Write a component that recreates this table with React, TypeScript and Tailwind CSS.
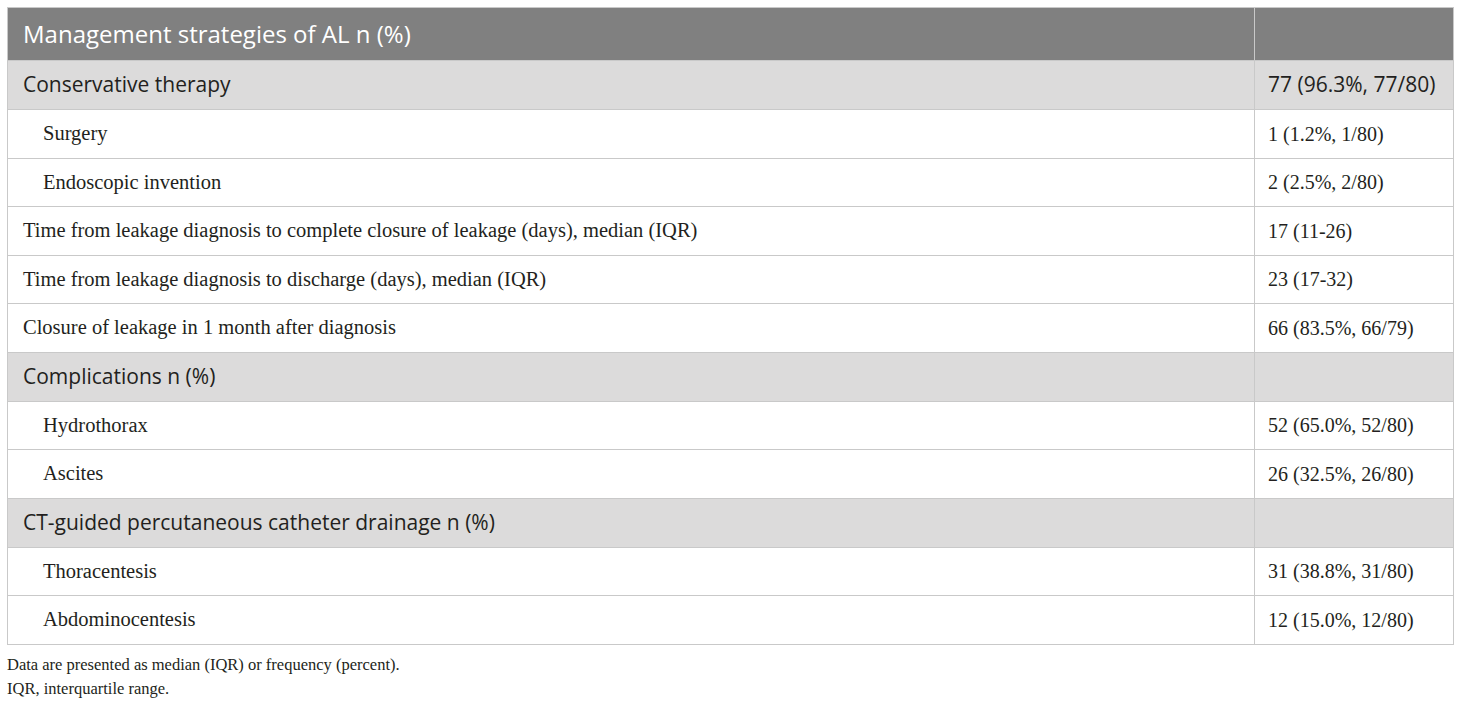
import React from 'react';

type Row = {
  label: string;
  value?: string;
  kind: 'section' | 'item' | 'sub';
};

const rows: Row[] = [
  { label: 'Conservative therapy', value: '77 (96.3%, 77/80)', kind: 'section' },
  { label: 'Surgery', value: '1 (1.2%, 1/80)', kind: 'sub' },
  { label: 'Endoscopic invention', value: '2 (2.5%, 2/80)', kind: 'sub' },
  { label: 'Time from leakage diagnosis to complete closure of leakage (days), median (IQR)', value: '17 (11-26)', kind: 'item' },
  { label: 'Time from leakage diagnosis to discharge (days), median (IQR)', value: '23 (17-32)', kind: 'item' },
  { label: 'Closure of leakage in 1 month after diagnosis', value: '66 (83.5%, 66/79)', kind: 'item' },
  { label: 'Complications n (%)', kind: 'section' },
  { label: 'Hydrothorax', value: '52 (65.0%, 52/80)', kind: 'sub' },
  { label: 'Ascites', value: '26 (32.5%, 26/80)', kind: 'sub' },
  { label: 'CT-guided percutaneous catheter drainage n (%)', kind: 'section' },
  { label: 'Thoracentesis', value: '31 (38.8%, 31/80)', kind: 'sub' },
  { label: 'Abdominocentesis', value: '12 (15.0%, 12/80)', kind: 'sub' },
];

const sans = "font-['Open_Sans',sans-serif]";
const serif = "font-['Liberation_Serif',serif]";

const App = () => {
  return (
    <div className="w-[1460px] h-[706px] bg-white pt-[7px] pl-[7px] text-[#231f20]">
      <table className="w-[1446px] border-collapse table-fixed">
        <colgroup>
          <col className="w-[1247px]" />
          <col className="w-[199px]" />
        </colgroup>
        <thead>
          <tr className="h-[53px] bg-[#808080]">
            <th className={`${sans} border border-[#c9c9c9] px-[15px] text-left text-[24px] font-normal text-white`}>
              Management strategies of AL n (%)
            </th>
            <th className="border border-[#c9c9c9]" />
          </tr>
        </thead>
        <tbody>
          {rows.map((r) => {
            if (r.kind === 'section') {
              return (
                <tr key={r.label} className="h-[49px] bg-[#dcdbdb]">
                  <td className={`${sans} border border-[#c9c9c9] px-[15px] text-[21px]`}>{r.label}</td>
                  <td className={`${sans} border border-[#c9c9c9] px-[13px] text-[21px]`}>{r.value}</td>
                </tr>
              );
            }
            return (
              <tr key={r.label} className="h-[48.5px]">
                <td
                  className={`${serif} border border-[#c9c9c9] text-[20.5px] ${
                    r.kind === 'sub' ? 'pl-[35px]' : 'pl-[15px]'
                  }`}
                >
                  {r.label}
                </td>
                <td className={`${serif} border border-[#c9c9c9] px-[13px] text-[20px]`}>{r.value}</td>
              </tr>
            );
          })}
        </tbody>
      </table>
      <div className={`${serif} mt-[8px] text-[16.5px] leading-[24px]`}>
        <p>Data are presented as median (IQR) or frequency (percent).</p>
        <p>IQR, interquartile range.</p>
      </div>
    </div>
  );
};

export default App;
